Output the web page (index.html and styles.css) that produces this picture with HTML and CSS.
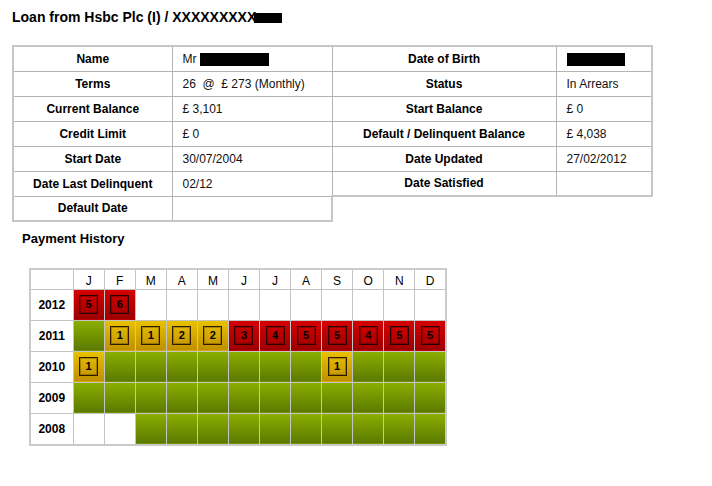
FILE: index.html
```html
<!DOCTYPE html>
<html>
<head>
<meta charset="utf-8">
<link rel="stylesheet" href="styles.css">
</head>
<body>
<h1 class="title">Loan from Hsbc Plc (I) / XXXXXXXXX<span class="redact redact-title"></span></h1>

<table class="info">
  <colgroup><col class="c1"><col class="c2"><col class="c3"><col class="c4"></colgroup>
  <tr><td class="lbl">Name</td><td class="val">Mr <span class="redact redact-name"></span></td><td class="lbl">Date of Birth</td><td class="val"><span class="redact redact-dob"></span></td></tr>
  <tr><td class="lbl">Terms</td><td class="val">26 &nbsp;@ &nbsp;£ 273 (Monthly)</td><td class="lbl">Status</td><td class="val">In Arrears</td></tr>
  <tr><td class="lbl">Current Balance</td><td class="val">£ 3,101</td><td class="lbl">Start Balance</td><td class="val">£ 0</td></tr>
  <tr><td class="lbl">Credit Limit</td><td class="val">£ 0</td><td class="lbl">Default / Delinquent Balance</td><td class="val">£ 4,038</td></tr>
  <tr><td class="lbl">Start Date</td><td class="val">30/07/2004</td><td class="lbl">Date Updated</td><td class="val">27/02/2012</td></tr>
  <tr><td class="lbl">Date Last Delinquent</td><td class="val">02/12</td><td class="lbl">Date Satisfied</td><td class="val"></td></tr>
  <tr><td class="lbl">Default Date</td><td class="val"></td><td class="blank blank-a"></td><td class="blank blank-b"></td></tr>
</table>

<h2 class="subtitle">Payment History</h2>

<table class="history">
  <colgroup><col class="yc"><col class="mc"><col class="mc"><col class="mc"><col class="mc"><col class="mc"><col class="mc"><col class="mc"><col class="mc"><col class="mc"><col class="mc"><col class="mc"><col class="mc"></colgroup>
  <tr class="head"><td></td><td>J</td><td>F</td><td>M</td><td>A</td><td>M</td><td>J</td><td>J</td><td>A</td><td>S</td><td>O</td><td>N</td><td>D</td></tr>
  <tr>
    <td class="yr">2012</td>
    <td class="red"><span class="box">5</span></td>
    <td class="red"><span class="box">6</span></td>
    <td></td><td></td><td></td><td></td><td></td><td></td><td></td><td></td><td></td><td></td>
  </tr>
  <tr>
    <td class="yr">2011</td>
    <td class="green"></td>
    <td class="gold"><span class="box">1</span></td>
    <td class="gold"><span class="box">1</span></td>
    <td class="gold"><span class="box">2</span></td>
    <td class="gold"><span class="box">2</span></td>
    <td class="red"><span class="box">3</span></td>
    <td class="red"><span class="box">4</span></td>
    <td class="red"><span class="box">5</span></td>
    <td class="red"><span class="box">5</span></td>
    <td class="red"><span class="box">4</span></td>
    <td class="red"><span class="box">5</span></td>
    <td class="red"><span class="box">5</span></td>
  </tr>
  <tr>
    <td class="yr">2010</td>
    <td class="gold"><span class="box">1</span></td>
    <td class="green"></td><td class="green"></td><td class="green"></td><td class="green"></td><td class="green"></td><td class="green"></td><td class="green"></td>
    <td class="gold"><span class="box">1</span></td>
    <td class="green"></td><td class="green"></td><td class="green"></td>
  </tr>
  <tr>
    <td class="yr">2009</td>
    <td class="green"></td><td class="green"></td><td class="green"></td><td class="green"></td><td class="green"></td><td class="green"></td><td class="green"></td><td class="green"></td><td class="green"></td><td class="green"></td><td class="green"></td><td class="green"></td>
  </tr>
  <tr>
    <td class="yr">2008</td>
    <td></td><td></td>
    <td class="green"></td><td class="green"></td><td class="green"></td><td class="green"></td><td class="green"></td><td class="green"></td><td class="green"></td><td class="green"></td><td class="green"></td><td class="green"></td>
  </tr>
</table>
</body>
</html>
```

FILE: styles.css
```css
html, body {
  margin: 0;
  padding: 0;
  background: #ffffff;
}
body {
  font-family: "Liberation Sans", Arial, sans-serif;
  color: #000;
  padding: 10px 0 0 12px;
}
.title {
  font-size: 14px;
  line-height: 15px;
  font-weight: bold;
  margin: 0 0 20px 0;
  display: flex;
  align-items: center;
}
.redact {
  display: inline-block;
  background: #000;
  vertical-align: middle;
}
.redact-title {
  width: 28px;
  height: 10px;
  margin-left: -2px;
}
.redact-name {
  width: 69px;
  height: 13px;
}
.redact-dob {
  width: 58px;
  height: 13px;
}

.info {
  border-collapse: collapse;
  table-layout: fixed;
  width: 639px;
  font-size: 12px;
  border: 2px solid #c6c6c6;
}
.info .c1 { width: 159px; }
.info .c2 { width: 160px; }
.info .c3 { width: 224px; }
.info .c4 { width: 96px; }
.info tr { height: 25px; }
.info td {
  border: 1px solid #b4b4b4;
  padding: 0 10px;
  white-space: nowrap;
  vertical-align: middle;
}
.info .lbl {
  font-weight: bold;
  text-align: center;
}
.info .val {
  text-align: left;
  color: #111;
}
.info .blank {
  border-bottom: hidden;
  border-right: hidden;
  border-top: 2px solid #c6c6c6;
}
.info .blank-a {
  border-left: 2px solid #c6c6c6;
}
.info .blank-b {
  border-left: hidden;
}

.subtitle {
  font-size: 13px;
  line-height: 15px;
  font-weight: bold;
  margin: 9px 0 22px 10px;
}

.history {
  border-collapse: collapse;
  table-layout: fixed;
  width: 418px;
  margin-left: 17px;
  border: 2px solid #cacaca;
  font-size: 12px;
}
.history .yc { width: 43px; }
.history .mc { width: 31px; }
.history td {
  border: 1px solid #c4c4c4;
  padding: 0;
  text-align: center;
  vertical-align: middle;
  height: 30px;
}
.history .head td {
  height: 20px;
  padding-top: 4px;
  box-sizing: border-box;
  vertical-align: middle;
}
.history .yr {
  font-weight: bold;
}
.history .red {
  background: linear-gradient(#d70000, #9c0000);
}
.history .gold {
  background: linear-gradient(#e8c200, #bf8f00);
}
.history .green {
  background: linear-gradient(#8bb000, #5b7800);
}
.box {
  display: inline-flex;
  align-items: center;
  justify-content: center;
  width: 17px;
  height: 17px;
  border: 1px solid rgba(20, 0, 0, 0.85);
  box-shadow: inset 0 0 0 1px rgba(0, 0, 0, 0.25);
  font-size: 11px;
  font-weight: bold;
  color: #000;
  line-height: 1;
  vertical-align: middle;
}
```
